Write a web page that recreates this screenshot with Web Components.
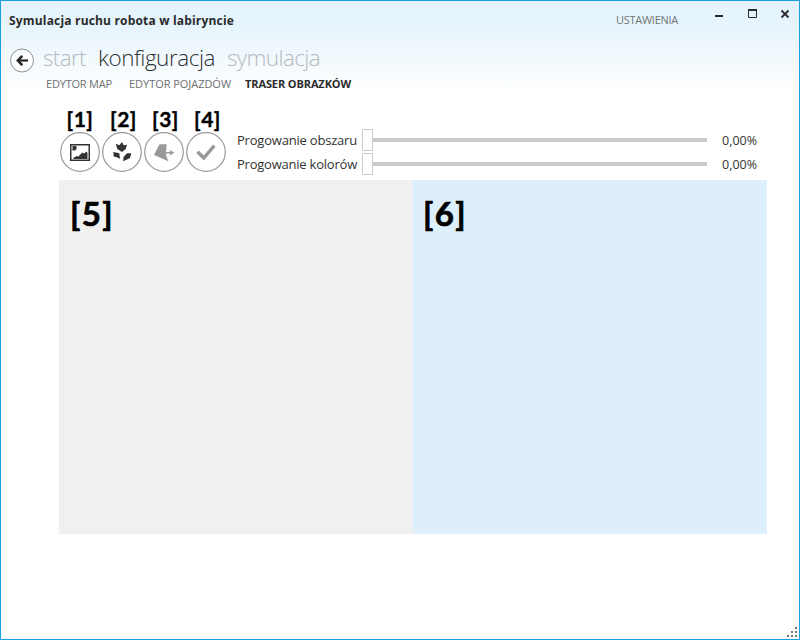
<!DOCTYPE html>
<html lang="pl"><head><meta charset="utf-8"><title>Symulacja ruchu robota w labiryncie</title>
<style>html,body{margin:0;height:100%;overflow:hidden;background:#fff}</style></head><body>
<app-window></app-window>
<script>
const define=(name,html,after)=>customElements.define(name,class extends HTMLElement{
  connectedCallback(){
    if(this.shadowRoot)return;
    const t=document.createElement('template');t.innerHTML=html;
    this.attachShadow({mode:'open'}).append(t.content.cloneNode(true));
    if(after)after.call(this);
  }
});
// Single-line label; spreads its letters over the width given in "w".
define('ui-label',`<style>:host{display:block;white-space:pre;line-height:1}span{display:inline-block}</style><span><slot></slot></span>`,function(){
  const w=+this.getAttribute('w'),s=this.shadowRoot.querySelector('span');
  this.style.width=w+'px';
  s.style.letterSpacing=(w-s.getBoundingClientRect().width)/this.textContent.length+'px';
});
define('window-buttons',`<style>:host{display:block;width:76px;height:12px}svg{display:block}</style>
<svg width="76" height="12" fill="none" stroke="#2b2b2b"><path d="M0 8H8" stroke-width="2"/><path d="M33.5 1V9.500H41.500V1" /><path d="M33 2H42" stroke-width="2"/><path d="M66.500 2.500L73.500 9.500M73.500 2.500L66.500 9.500" stroke-width="1.8"/></svg>`);
define('title-bar',`<style>:host{display:flex;height:38px;padding:0 8px 0 8px;align-items:center;color:#2b2b2b;font-size:12px;font-weight:700}
.t{margin-top:2px}.s{margin:-2px 37px 0 auto;font-size:11px;font-weight:400;color:#717578}window-buttons{margin-top:-12px}</style>
<ui-label class="t" w="225">Symulacja ruchu robota w labiryncie</ui-label><ui-label class="s" w="62">USTAWIENIA</ui-label><window-buttons></window-buttons>`);
define('main-nav',`<style>:host{display:flex;height:35px;padding-left:9px;align-items:center;font-size:22.5px;font-weight:300;color:#b4babd}
svg{margin:7px 8px 0 0}.a{color:#303336}ui-label{margin:4px 12px 0 0}</style>
<svg width="25" height="25" viewBox="0 0 25 25" fill="none"><circle cx="12" cy="12.500" r="11.500" stroke="#8c8f91" fill="#fbfdfe"/><path d="M18 12.500H8" stroke="#222" stroke-width="2.200"/><path d="M12.300 7.800L7.800 12.500L12.300 17.200" stroke="#222" stroke-width="2.500"/></svg>
<ui-label w="43">start</ui-label><ui-label class="a" w="117">konfiguracja</ui-label><ui-label w="93">symulacja</ui-label>`);
define('sub-nav',`<style>:host{display:flex;box-sizing:border-box;height:20px;padding:0 0 2px 45px;align-items:center;font-size:11px;color:#707070}b{color:#2b2b2b}.x{margin:0 14px 0 17px}</style>
<ui-label w="66">EDYTOR MAP</ui-label><ui-label class="x" w="102">EDYTOR POJAZDÓW</ui-label><b><ui-label w="106">TRASER OBRAZKÓW</ui-label></b>`);
define('tool-button',`<style>:host{display:flex;flex-direction:column;align-items:center;width:40px;height:66px;color:#333}:host([off]){color:#999}
ui-label{font:700 21px/24px Lato,sans-serif;color:#000;height:25px;-webkit-text-stroke:.4px #000;padding-left:3px}:host([icon=image]) ui-label{padding-left:0}svg{display:block}</style>
<ui-label w="27"></ui-label><svg width="40" height="40"><circle cx="20" cy="20" r="19.300" fill="none" stroke="#999" stroke-width="1.200"/><g></g></svg>`,function(){
  const art={
    image:'<path fill-rule="evenodd" fill="currentColor" d="M10 12H30V29H10ZM11.500 13.500V27.500H28.500V13.500Z"/><path fill="currentColor" d="M12.500 14H16.500V17L15 18.500H12.500ZM13.500 27V25.800L17 24L18.500 24.500L22.300 20.500L24 21.500L26.800 19.500L27.500 21V27Z"/>',
    pieces:'<path fill="currentColor" d="M13.700 11.700L17.300 13.300L20 10L21.700 13.300L25 12.700L23.700 17L20 20L15.300 17ZM11.300 20L17.300 21.300L18 26.700L14.700 25.300L11.700 24.500ZM29.300 21.300L28 26L21.300 29.300L21.500 25L25 21.300Z"/>',
    move:'<path fill="currentColor" d="M15.500 12.300H22.700L22 20H26.500L25.300 17.500L30.300 20.700L25.300 24L26.500 21.500H22V23L24.300 29.200L10 23Z"/>',
    check:'<path fill="none" stroke="currentColor" stroke-width="3.400" d="M11.500 19.700L17.800 26L28.300 13.700"/>'};
  this.shadowRoot.querySelector('g').innerHTML=art[this.getAttribute('icon')];
  const old=this.shadowRoot.querySelector('ui-label'),l=document.createElement('ui-label');
  l.setAttribute('w','27');l.textContent=this.getAttribute('label');old.replaceWith(l);
});
define('range-row',`<style>:host{display:flex;align-items:center;height:24px;font-size:13px;color:#333}
i{box-sizing:border-box;width:11px;height:22px;border:1px solid #ccc;background:#fff;margin-left:5px}u{width:334px;height:4px;background:#ccc;margin-right:15px}.v{font-size:12.500px;margin-top:2px}</style>
<ui-label w="120"></ui-label><i></i><u></u><ui-label class="v" w="35">0,00%</ui-label>`,function(){
  const old=this.shadowRoot.querySelector('ui-label'),l=document.createElement('ui-label');
  l.setAttribute('w','120');l.textContent=this.getAttribute('label');old.replaceWith(l);
});
define('image-pane',`<style>:host{display:block;box-sizing:border-box;width:354px;height:354px;padding:17px 11px;background:#f0f0f0}:host([result]){background:#dceffa;padding-left:10px}</style><slot></slot>`);
define('resize-grip',`<style>:host{display:block;position:absolute;right:2px;bottom:2px}svg{display:block}</style><svg width="10" height="10" fill="#777"><path d="M8 0h2v2h-2zM4 4h2v2h-2zM8 4h2v2h-2zM0 8h2v2h-2zM4 8h2v2h-2zM8 8h2v2h-2z"/></svg>`);
define('app-window',`<style>:host{display:block;position:relative;box-sizing:border-box;width:800px;height:640px;border:1px solid #1ba1e2;background:linear-gradient(#e5f3fc 0,#e6f4fc 25px,#fff 92px);font-family:"Open Sans","Noto Sans",sans-serif}
.tools{display:flex;padding:13px 0 0 59px;height:73px}.tools tool-button{margin-right:2px}.ranges{padding:21px 0 0 9px}.panes{display:flex;padding-left:58px}
.n{font:700 33px/33px Lato,sans-serif;color:#000;-webkit-text-stroke:.7px #000}</style>
<title-bar></title-bar><main-nav></main-nav><sub-nav></sub-nav>
<div class="tools"><tool-button icon="image" label="[1]"></tool-button><tool-button icon="pieces" label="[2]"></tool-button><tool-button icon="move" label="[3]" off></tool-button><tool-button icon="check" label="[4]" off></tool-button>
<div class="ranges"><range-row label="Progowanie obszaru"></range-row><range-row label="Progowanie kolorów"></range-row></div></div>
<div class="panes"><image-pane><ui-label class="n" w="44">[5]</ui-label></image-pane><image-pane result><ui-label class="n" w="44">[6]</ui-label></image-pane></div><resize-grip></resize-grip>`);
</script></body></html>
